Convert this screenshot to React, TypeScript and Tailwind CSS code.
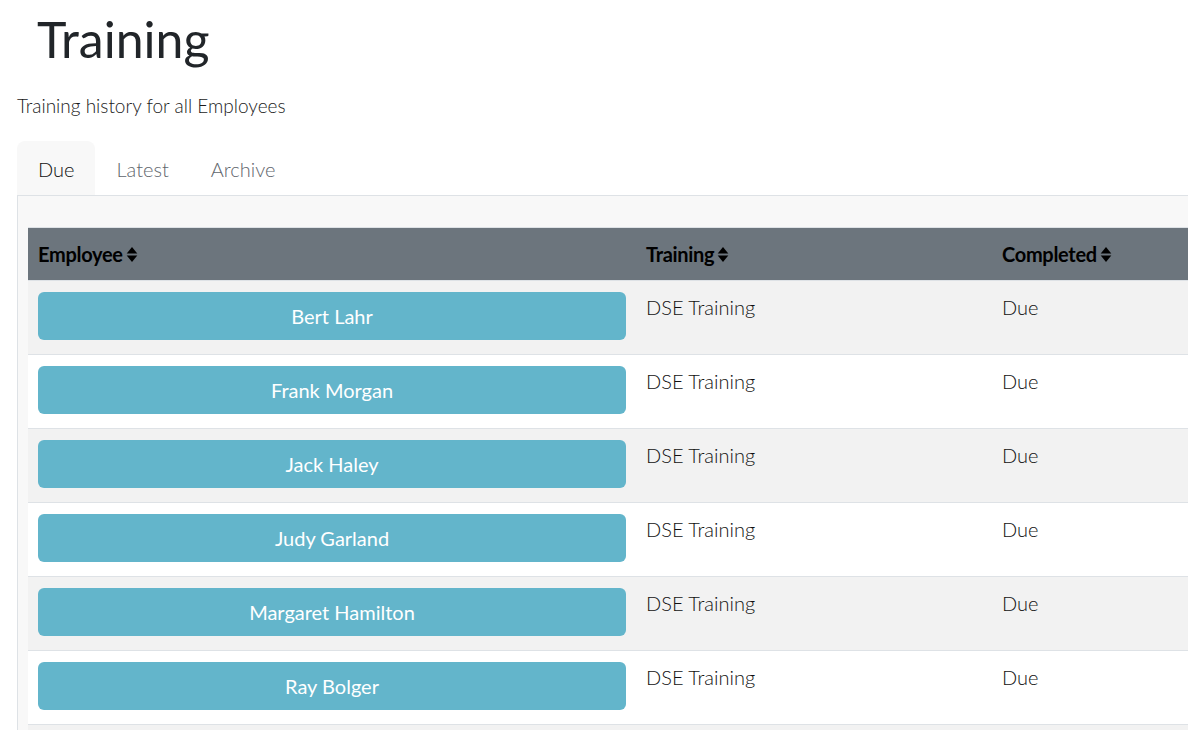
import React from 'react';

const employees = [
  'Bert Lahr',
  'Frank Morgan',
  'Jack Haley',
  'Judy Garland',
  'Margaret Hamilton',
  'Ray Bolger',
];

const SortIcon = () => (
  <svg viewBox="0 0 11 16" className="ml-[3px] h-[17px] w-[12px] fill-current">
    <path d="M5.5 1 L10.5 7 L0.5 7 Z" />
    <path d="M0.5 9 L10.5 9 L5.5 15 Z" />
  </svg>
);

const HeaderCell = ({ label, className }: { label: string; className: string }) => (
  <div className={`flex items-center px-[10px] ${className}`}>
    <span className="font-bold tracking-[-0.3px]">{label}</span>
    <SortIcon />
  </div>
);

export default function App() {
  return (
    <div
      className="h-[730px] w-[1188px] overflow-hidden bg-white text-[#212529]"
      style={{ fontFamily: 'Lato, "Noto Sans", sans-serif' }}
    >
      <div className="w-[1260px] pl-[17px]">
        <h1 className="pl-[20px] pt-[9px] text-[50px] leading-[60px] text-[#212529]">Training</h1>
        <p className="mt-[22px] text-[19px] font-light leading-[30px] text-[#1a1a1a]">
          Training history for all Employees
        </p>

        {/* Tabs */}
        <div className="mt-[20px] flex border-b border-[#dee2e6] text-[20px] font-light leading-[30px]">
          <div className="rounded-t-[8px] bg-[#f8f8f8] px-[21px] pb-[11px] pt-[13px] text-[#111]">Due</div>
          <div className="px-[21px] pb-[11px] pt-[13px] text-[#5f666d]">Latest</div>
          <div className="px-[21px] pb-[11px] pt-[13px] text-[#5f666d]">Archive</div>
        </div>

        {/* Panel */}
        <div className="border-l border-[#dee2e6] bg-[#f8f8f8] pl-[10px] pt-[31px]">
          <div className="border-t border-[#dee2e6]">
            <div className="flex h-[52px] bg-[#6c757d] text-[20px] text-black">
              <HeaderCell label="Employee" className="w-[608px]" />
              <HeaderCell label="Training" className="w-[356px]" />
              <HeaderCell label="Completed" className="flex-1" />
            </div>
            {employees.map((name, i) => (
              <div
                key={name}
                className={`flex border-t border-[#dee2e6] text-[20px] leading-[30px] ${
                  i % 2 === 0 ? 'bg-[#f2f2f2]' : 'bg-white'
                }`}
              >
                <div className="w-[608px] px-[10px] pb-[14px] pt-[11px]">
                  <button className="flex h-[48px] w-full items-center justify-center rounded-[6px] bg-[#63b5cb] text-white">
                    {name}
                  </button>
                </div>
                <div className="w-[356px] px-[10px] pt-[11px] font-light text-[#111]">DSE Training</div>
                <div className="flex-1 px-[10px] pt-[11px] font-light text-[#111]">Due</div>
              </div>
            ))}
            <div className="h-[20px] border-t border-[#dee2e6] bg-[#f2f2f2]" />
          </div>
        </div>
      </div>
    </div>
  );
}
